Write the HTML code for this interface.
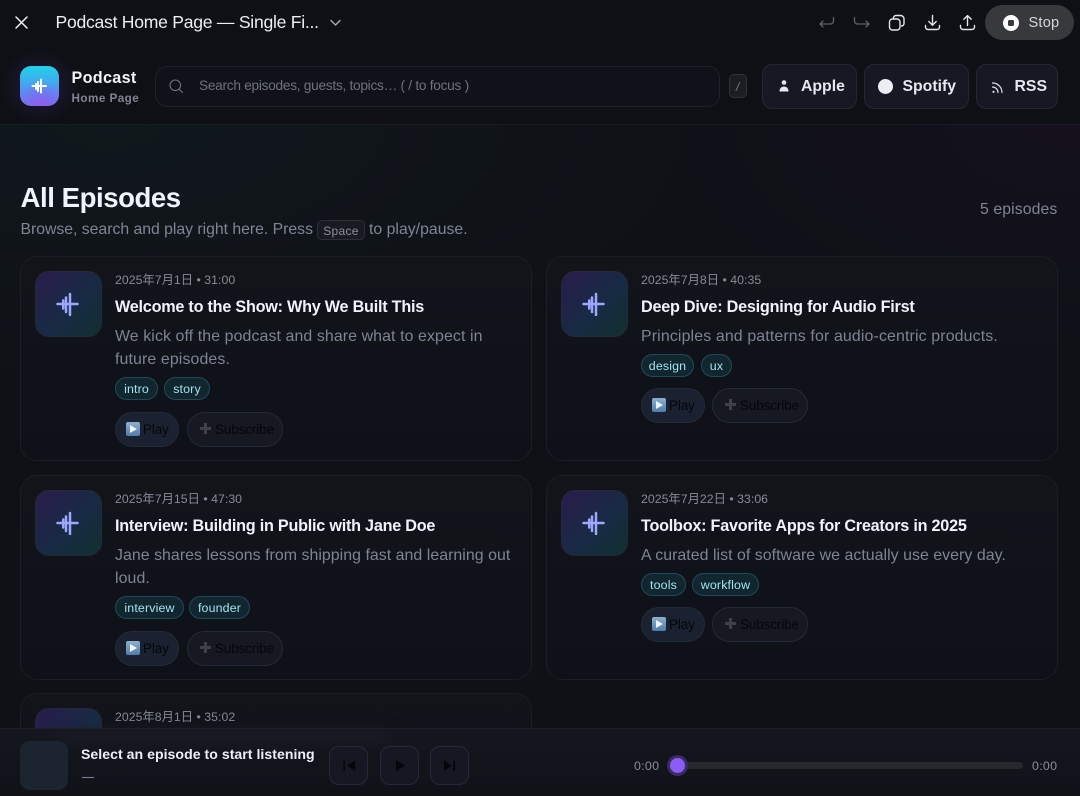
<!DOCTYPE html>
<html lang="en"><head><meta charset="utf-8">
<style>
*{box-sizing:border-box;margin:0;padding:0}
html,body{width:1080px;height:796px;overflow:hidden;background:#0e1015}
body{position:relative;font-family:"Liberation Sans","Noto Sans CJK SC",sans-serif}
.a,.t{position:absolute}
.t{white-space:nowrap;line-height:1}
.bg{left:0;top:125px;width:1080px;height:671px;background:radial-gradient(600px 260px at 10% 0,#10181d 0,rgba(16,24,29,0) 100%),radial-gradient(500px 260px at 100% 0,#14111d 0,rgba(20,17,29,0) 100%),#0f1116}
.card{position:absolute;width:512px;height:205px;border:1px solid #1b1e26;border-radius:17px;background:linear-gradient(180deg,#12141a,#0e1118)}
.thumb{position:absolute;left:14px;top:14px;width:67px;height:66px;border-radius:14px;border:1px solid #242a38;background:linear-gradient(135deg,#2a1c4c 0,#182a44 55%,#10302f 100%)}
.thumb svg{position:absolute;left:20px;top:20px}
.date{left:94px;top:17px;font-size:12.3px;color:#868b98;letter-spacing:.02px}
.title{left:94px;top:42px;font-size:16.2px;font-weight:700;color:#f1f3fb;letter-spacing:-.23px}
.desc{left:94px;font-size:15.9px;color:#7f8494;letter-spacing:.08px}
.tag{position:absolute;height:23px;border-radius:12px;border:1px solid #1f4a5c;background:#11262f;color:#9fe4f2;font-size:12.4px;line-height:22px;text-align:center;letter-spacing:.15px}
.btn{position:absolute;height:35px;border-radius:18px;border:1px solid #252a38}
.play{width:64px;background:#1a2130}
.sub{width:96px;background:#161822}
.btxt{position:absolute;top:10px;font-size:13.4px;line-height:14px;color:#05060a;white-space:nowrap;letter-spacing:-.08px}
.emo{position:absolute;left:10px;top:9px;width:14px;height:14px;border-radius:2px;background:linear-gradient(180deg,#8fb0cd,#4f7da8)}
.emo:after{content:"";position:absolute;left:4px;top:3px;border-left:7px solid #eef4fa;border-top:4px solid transparent;border-bottom:4px solid transparent}
.plus{position:absolute;left:12px;top:10px;width:11px;height:11px}
.plus:before,.plus:after{content:"";position:absolute;background:#3f4148}
.plus:before{left:4px;top:0;width:3px;height:11px}
.plus:after{left:0;top:4px;width:11px;height:3px}
.pill{position:absolute;top:64px;height:45px;border:1px solid #232733;border-radius:10px;background:#161923}
.ctl{position:absolute;top:746px;width:39px;height:39px;border:1px solid #262a38;border-radius:10px;background:#151823}
</style></head><body>

<div class="a bg"></div>
<div class="a" style="left:0;top:124px;width:1080px;height:1px;background:#1a1c23"></div>

<!-- top bar -->
<svg class="a" style="left:14px;top:15px" width="15" height="15" viewBox="0 0 15 15"><path d="M2 2l11 11M13 2L2 13" stroke="#f2f3f5" stroke-width="1.5" fill="none" stroke-linecap="round"/></svg>
<div class="t" style="left:55.500px;top:14px;font-size:17.6px;color:#eceef2;letter-spacing:-.27px">Podcast Home Page — Single Fi...</div>
<svg class="a" style="left:329px;top:18px" width="13" height="10" viewBox="0 0 13 10"><path d="M2 2.500l4.500 4.500L11 2.500" stroke="#a9abb2" stroke-width="1.400" fill="none" stroke-linecap="round" stroke-linejoin="round"/></svg>

<svg class="a" style="left:817px;top:14px" width="20" height="16" viewBox="0 0 20 16"><path d="M16.500 3.500v3.500a3 3 0 0 1-3 3H3M3 10l3-3M3 10l3 3" stroke="#5f6167" stroke-width="1.300" fill="none" stroke-linecap="round" stroke-linejoin="round"/></svg>
<svg class="a" style="left:852px;top:14px" width="20" height="16" viewBox="0 0 20 16"><path d="M2.500 3.500v3.500a3 3 0 0 0 3 3H17M17 10l-3-3M17 10l-3 3" stroke="#5f6167" stroke-width="1.300" fill="none" stroke-linecap="round" stroke-linejoin="round"/></svg>
<svg class="a" style="left:888px;top:14px" width="18" height="18" viewBox="0 0 18 18"><rect x="1.500" y="5" width="10.500" height="11" rx="3" stroke="#e4e5e8" stroke-width="1.400" fill="#0e1015"/><path d="M5.500 4.500V4a2.500 2.500 0 0 1 2.500-2.500h4.500A3.500 3.500 0 0 1 16 5v4.500a2.500 2.500 0 0 1-2.500 2.500H13" stroke="#e4e5e8" stroke-width="1.400" fill="none"/></svg>
<svg class="a" style="left:924px;top:14px" width="17" height="17" viewBox="0 0 17 17"><path d="M8.500 1.500v9.500M4.800 7.500l3.700 3.700 3.700-3.700M1.500 11.500v1.500a2.500 2.500 0 0 0 2.500 2.500h9a2.500 2.500 0 0 0 2.500-2.500v-1.500" stroke="#e4e5e8" stroke-width="1.400" fill="none" stroke-linecap="round" stroke-linejoin="round"/></svg>
<svg class="a" style="left:959px;top:14px" width="17" height="17" viewBox="0 0 17 17"><path d="M8.500 11.500V1.800M4.800 5.300l3.700-3.700 3.700 3.700M1.500 11.500v1.500a2.500 2.500 0 0 0 2.500 2.500h9a2.500 2.500 0 0 0 2.500-2.500v-1.500" stroke="#e4e5e8" stroke-width="1.400" fill="none" stroke-linecap="round" stroke-linejoin="round"/></svg>
<div class="a" style="left:985px;top:5px;width:89px;height:35px;border-radius:18px;background:#38393d"></div>
<div class="a" style="left:1003px;top:15px;width:16px;height:16px;border-radius:50%;background:#fff"></div>
<div class="a" style="left:1008px;top:20px;width:6px;height:6px;border-radius:1.500px;background:#38393d"></div>
<div class="t" style="left:1028.500px;top:15.500px;font-size:14.600px;color:#d6d7da;letter-spacing:.2px">Stop</div>

<!-- header -->
<div class="a" style="left:0;top:50px;width:100px;height:74px;background:radial-gradient(40px 38px at 40px 36px,rgba(98,60,180,.24),rgba(98,60,180,0) 100%)"></div>
<div class="a" style="left:20px;top:66px;width:39px;height:40px;border-radius:11px;background:radial-gradient(30px 24px at 55% 100%,#8f5cf0 0,rgba(143,92,240,0) 100%),linear-gradient(180deg,#20d3ea 0,#4d9bf0 55%,#6a7bef 100%)"></div>
<svg class="a" style="left:30px;top:77px" width="18" height="18" viewBox="0 0 18 18"><path d="M2.500 9h13.500M6 7v5M8 5v9M11 2.500v13" stroke="#fff" stroke-width="2" fill="none" stroke-linecap="round"/></svg>
<div class="t" style="left:71.500px;top:70px;font-size:16.200px;font-weight:700;color:#f2f4f8;letter-spacing:.3px">Podcast</div>
<div class="t" style="left:71.500px;top:92.500px;font-size:11.700px;font-weight:700;color:#7f8594;letter-spacing:.45px">Home Page</div>

<div class="a" style="left:155px;top:66px;width:565px;height:41px;border:1px solid #1f222b;border-radius:12px;background:#101219"></div>
<svg class="a" style="left:168px;top:78px" width="17" height="17" viewBox="0 0 17 17"><circle cx="7.300" cy="7.300" r="5.300" stroke="#6e717a" stroke-width="1.100" fill="none"/><path d="M11.300 11.300l3.200 3.200" stroke="#6e717a" stroke-width="1.100" stroke-linecap="round"/></svg>
<div class="t" style="left:199px;top:79px;font-size:13.700px;color:#6e727e;letter-spacing:-.28px">Search episodes, guests, topics… ( / to focus )</div>
<div class="a" style="left:729px;top:74px;width:18px;height:24px;border:1px solid #2f323a;border-radius:5px;background:#1b1d22"></div>
<div class="t" style="left:736px;top:81px;font-size:12px;color:#7a7d85;font-style:italic">/</div>

<div class="pill" style="left:762px;width:95px"></div>
<svg class="a" style="left:777px;top:79px" width="14" height="14" viewBox="0 0 14 14"><circle cx="7" cy="3.500" r="2.300" fill="#e6e8ef"/><path d="M2.500 12.500c0-3.300 2-5 4.500-5s4.500 1.700 4.500 5z" fill="#e6e8ef"/></svg>
<div class="t" style="left:801px;top:78.500px;font-size:15.800px;font-weight:700;color:#e6e8ef">Apple</div>
<div class="pill" style="left:864px;width:105px"></div>
<div class="a" style="left:878px;top:79px;width:15px;height:15px;border-radius:50%;background:#eceef4"></div>
<div class="t" style="left:902.500px;top:78.500px;font-size:15.800px;font-weight:700;color:#e6e8ef">Spotify</div>
<div class="pill" style="left:976px;width:82px"></div>
<svg class="a" style="left:991px;top:81px" width="13" height="13" viewBox="0 0 13 13"><circle cx="2.500" cy="10.800" r="1.100" fill="#dfe1e8"/><path d="M1.500 6a5.500 5.500 0 0 1 5.500 5.500M1.500 2a9.500 9.500 0 0 1 9.500 9.500" stroke="#dfe1e8" stroke-width="1.200" fill="none" stroke-linecap="round"/></svg>
<div class="t" style="left:1014.500px;top:78.500px;font-size:15.800px;font-weight:700;color:#e6e8ef">RSS</div>

<!-- heading -->
<div class="t" style="left:20.500px;top:184px;font-size:27.600px;font-weight:700;color:#f1f4fb;letter-spacing:-.45px">All Episodes</div>
<div class="t" style="left:20.500px;top:222px;font-size:15.800px;color:#7f8594;letter-spacing:-.02px">Browse, search and play right here. Press</div>
<div class="a" style="left:317px;top:220px;width:48px;height:20px;border:1px solid #2c2f38;border-radius:5px;background:#181b21;color:#8c909b;font-size:12px;line-height:20px;text-align:center;letter-spacing:.3px">Space</div>
<div class="t" style="left:369px;top:222px;font-size:15.800px;color:#7f8594;letter-spacing:.02px">to play/pause.</div>
<div class="t" style="left:980px;top:202px;font-size:15.800px;color:#7f8594;letter-spacing:.1px">5 episodes</div>

<!-- cards -->
<div class="card" style="left:20px;top:256px">
  <div class="thumb"><svg width="24" height="24" viewBox="0 0 24 24"><path d="M1.500 12h20M7.200 8.500v8M10 5.500v14.500M14 2v21" stroke="#9da7ff" stroke-width="2.500" fill="none" stroke-linecap="round"/></svg></div>
  <div class="t date">2025年7月1日 • 31:00</div>
  <div class="t title">Welcome to the Show: Why We Built This</div>
  <div class="t desc" style="top:72px;letter-spacing:.1px">We kick off the podcast and share what to expect in</div>
  <div class="t desc" style="top:95px;letter-spacing:.12px">future episodes.</div>
  <div class="tag" style="left:94px;top:120px;width:43px">intro</div>
  <div class="tag" style="left:143px;top:120px;width:46px">story</div>
  <div class="btn play" style="left:94px;top:155px"><i class="emo"></i><span class="btxt" style="left:27px">Play</span></div>
  <div class="btn sub" style="left:166px;top:155px"><i class="plus"></i><span class="btxt" style="left:27px">Subscribe</span></div>
</div>

<div class="card" style="left:546px;top:256px">
  <div class="thumb"><svg width="24" height="24" viewBox="0 0 24 24"><path d="M1.500 12h20M7.200 8.500v8M10 5.500v14.500M14 2v21" stroke="#9da7ff" stroke-width="2.500" fill="none" stroke-linecap="round"/></svg></div>
  <div class="t date">2025年7月8日 • 40:35</div>
  <div class="t title">Deep Dive: Designing for Audio First</div>
  <div class="t desc" style="top:72px;letter-spacing:.14px">Principles and patterns for audio-centric products.</div>
  <div class="tag" style="left:94px;top:97px;width:53px">design</div>
  <div class="tag" style="left:154px;top:97px;width:31px">ux</div>
  <div class="btn play" style="left:94px;top:131px"><i class="emo"></i><span class="btxt" style="left:27px">Play</span></div>
  <div class="btn sub" style="left:165px;top:131px"><i class="plus"></i><span class="btxt" style="left:27px">Subscribe</span></div>
</div>

<div class="card" style="left:20px;top:475px">
  <div class="thumb"><svg width="24" height="24" viewBox="0 0 24 24"><path d="M1.500 12h20M7.200 8.500v8M10 5.500v14.500M14 2v21" stroke="#9da7ff" stroke-width="2.500" fill="none" stroke-linecap="round"/></svg></div>
  <div class="t date">2025年7月15日 • 47:30</div>
  <div class="t title">Interview: Building in Public with Jane Doe</div>
  <div class="t desc" style="top:72px;letter-spacing:.04px">Jane shares lessons from shipping fast and learning out</div>
  <div class="t desc" style="top:95px">loud.</div>
  <div class="tag" style="left:94px;top:120px;width:69px">interview</div>
  <div class="tag" style="left:168px;top:120px;width:61px">founder</div>
  <div class="btn play" style="left:94px;top:155px"><i class="emo"></i><span class="btxt" style="left:27px">Play</span></div>
  <div class="btn sub" style="left:166px;top:155px"><i class="plus"></i><span class="btxt" style="left:27px">Subscribe</span></div>
</div>

<div class="card" style="left:546px;top:475px">
  <div class="thumb"><svg width="24" height="24" viewBox="0 0 24 24"><path d="M1.500 12h20M7.200 8.500v8M10 5.500v14.500M14 2v21" stroke="#9da7ff" stroke-width="2.500" fill="none" stroke-linecap="round"/></svg></div>
  <div class="t date">2025年7月22日 • 33:06</div>
  <div class="t title">Toolbox: Favorite Apps for Creators in 2025</div>
  <div class="t desc" style="top:72px;letter-spacing:.04px">A curated list of software we actually use every day.</div>
  <div class="tag" style="left:94px;top:97px;width:45px">tools</div>
  <div class="tag" style="left:145px;top:97px;width:67px">workflow</div>
  <div class="btn play" style="left:94px;top:131px"><i class="emo"></i><span class="btxt" style="left:27px">Play</span></div>
  <div class="btn sub" style="left:165px;top:131px"><i class="plus"></i><span class="btxt" style="left:27px">Subscribe</span></div>
</div>

<div class="card" style="left:20px;top:693px;height:103px;border-bottom:0;border-radius:17px 17px 0 0">
  <div class="thumb"></div>
  <div class="t date">2025年8月1日 • 35:02</div>
</div>

<!-- player -->
<div class="a" style="left:0;top:728px;width:1080px;height:68px;border-top:1px solid #1e2027;background:linear-gradient(180deg,#14171f 0,#101218 100%)"></div>
<div class="a" style="left:50px;top:729px;width:340px;height:14px;background:#1d1f27;opacity:.55;filter:blur(7px)"></div>
<div class="a" style="left:20px;top:741px;width:48px;height:49px;border-radius:10px;background:#1c2430"></div>
<div class="t" style="left:81px;top:747px;font-size:14.100px;font-weight:700;color:#eceff6;letter-spacing:.03px">Select an episode to start listening</div>
<div class="a" style="left:82px;top:777px;width:12px;height:1px;background:#7f8594"></div>
<div class="ctl" style="left:329px"></div>
<div class="ctl" style="left:380px"></div>
<div class="ctl" style="left:430px"></div>
<svg class="a" style="left:340px;top:758px" width="16" height="16" viewBox="0 0 16 16"><path d="M4.200 2.500v10.500" stroke="#05060a" stroke-width="1.700"/><path d="M15 2.500v10.500L7 7.750z" fill="#05060a"/></svg>
<svg class="a" style="left:391px;top:758px" width="16" height="16" viewBox="0 0 16 16"><path d="M5 2v11.500L14 7.750z" fill="#05060a"/></svg>
<svg class="a" style="left:441px;top:758px" width="16" height="16" viewBox="0 0 16 16"><path d="M3 2.500v10.500L11 7.750z" fill="#05060a"/><path d="M13.300 2.500v10.500" stroke="#05060a" stroke-width="1.700"/></svg>

<div class="t" style="left:634px;top:760px;font-size:12.400px;color:#8a8e9a;letter-spacing:.3px">0:00</div>
<div class="a" style="left:670px;top:762px;width:353px;height:7px;border-radius:4px;background:#26282e"></div>
<div class="a" style="left:667px;top:755px;width:21px;height:21px;border-radius:50%;background:#3a2b63"></div>
<div class="a" style="left:670px;top:758px;width:15px;height:15px;border-radius:50%;background:#8b5cf6"></div>
<div class="t" style="left:1032px;top:760px;font-size:12.400px;color:#8a8e9a;letter-spacing:.3px">0:00</div>
</body></html>
